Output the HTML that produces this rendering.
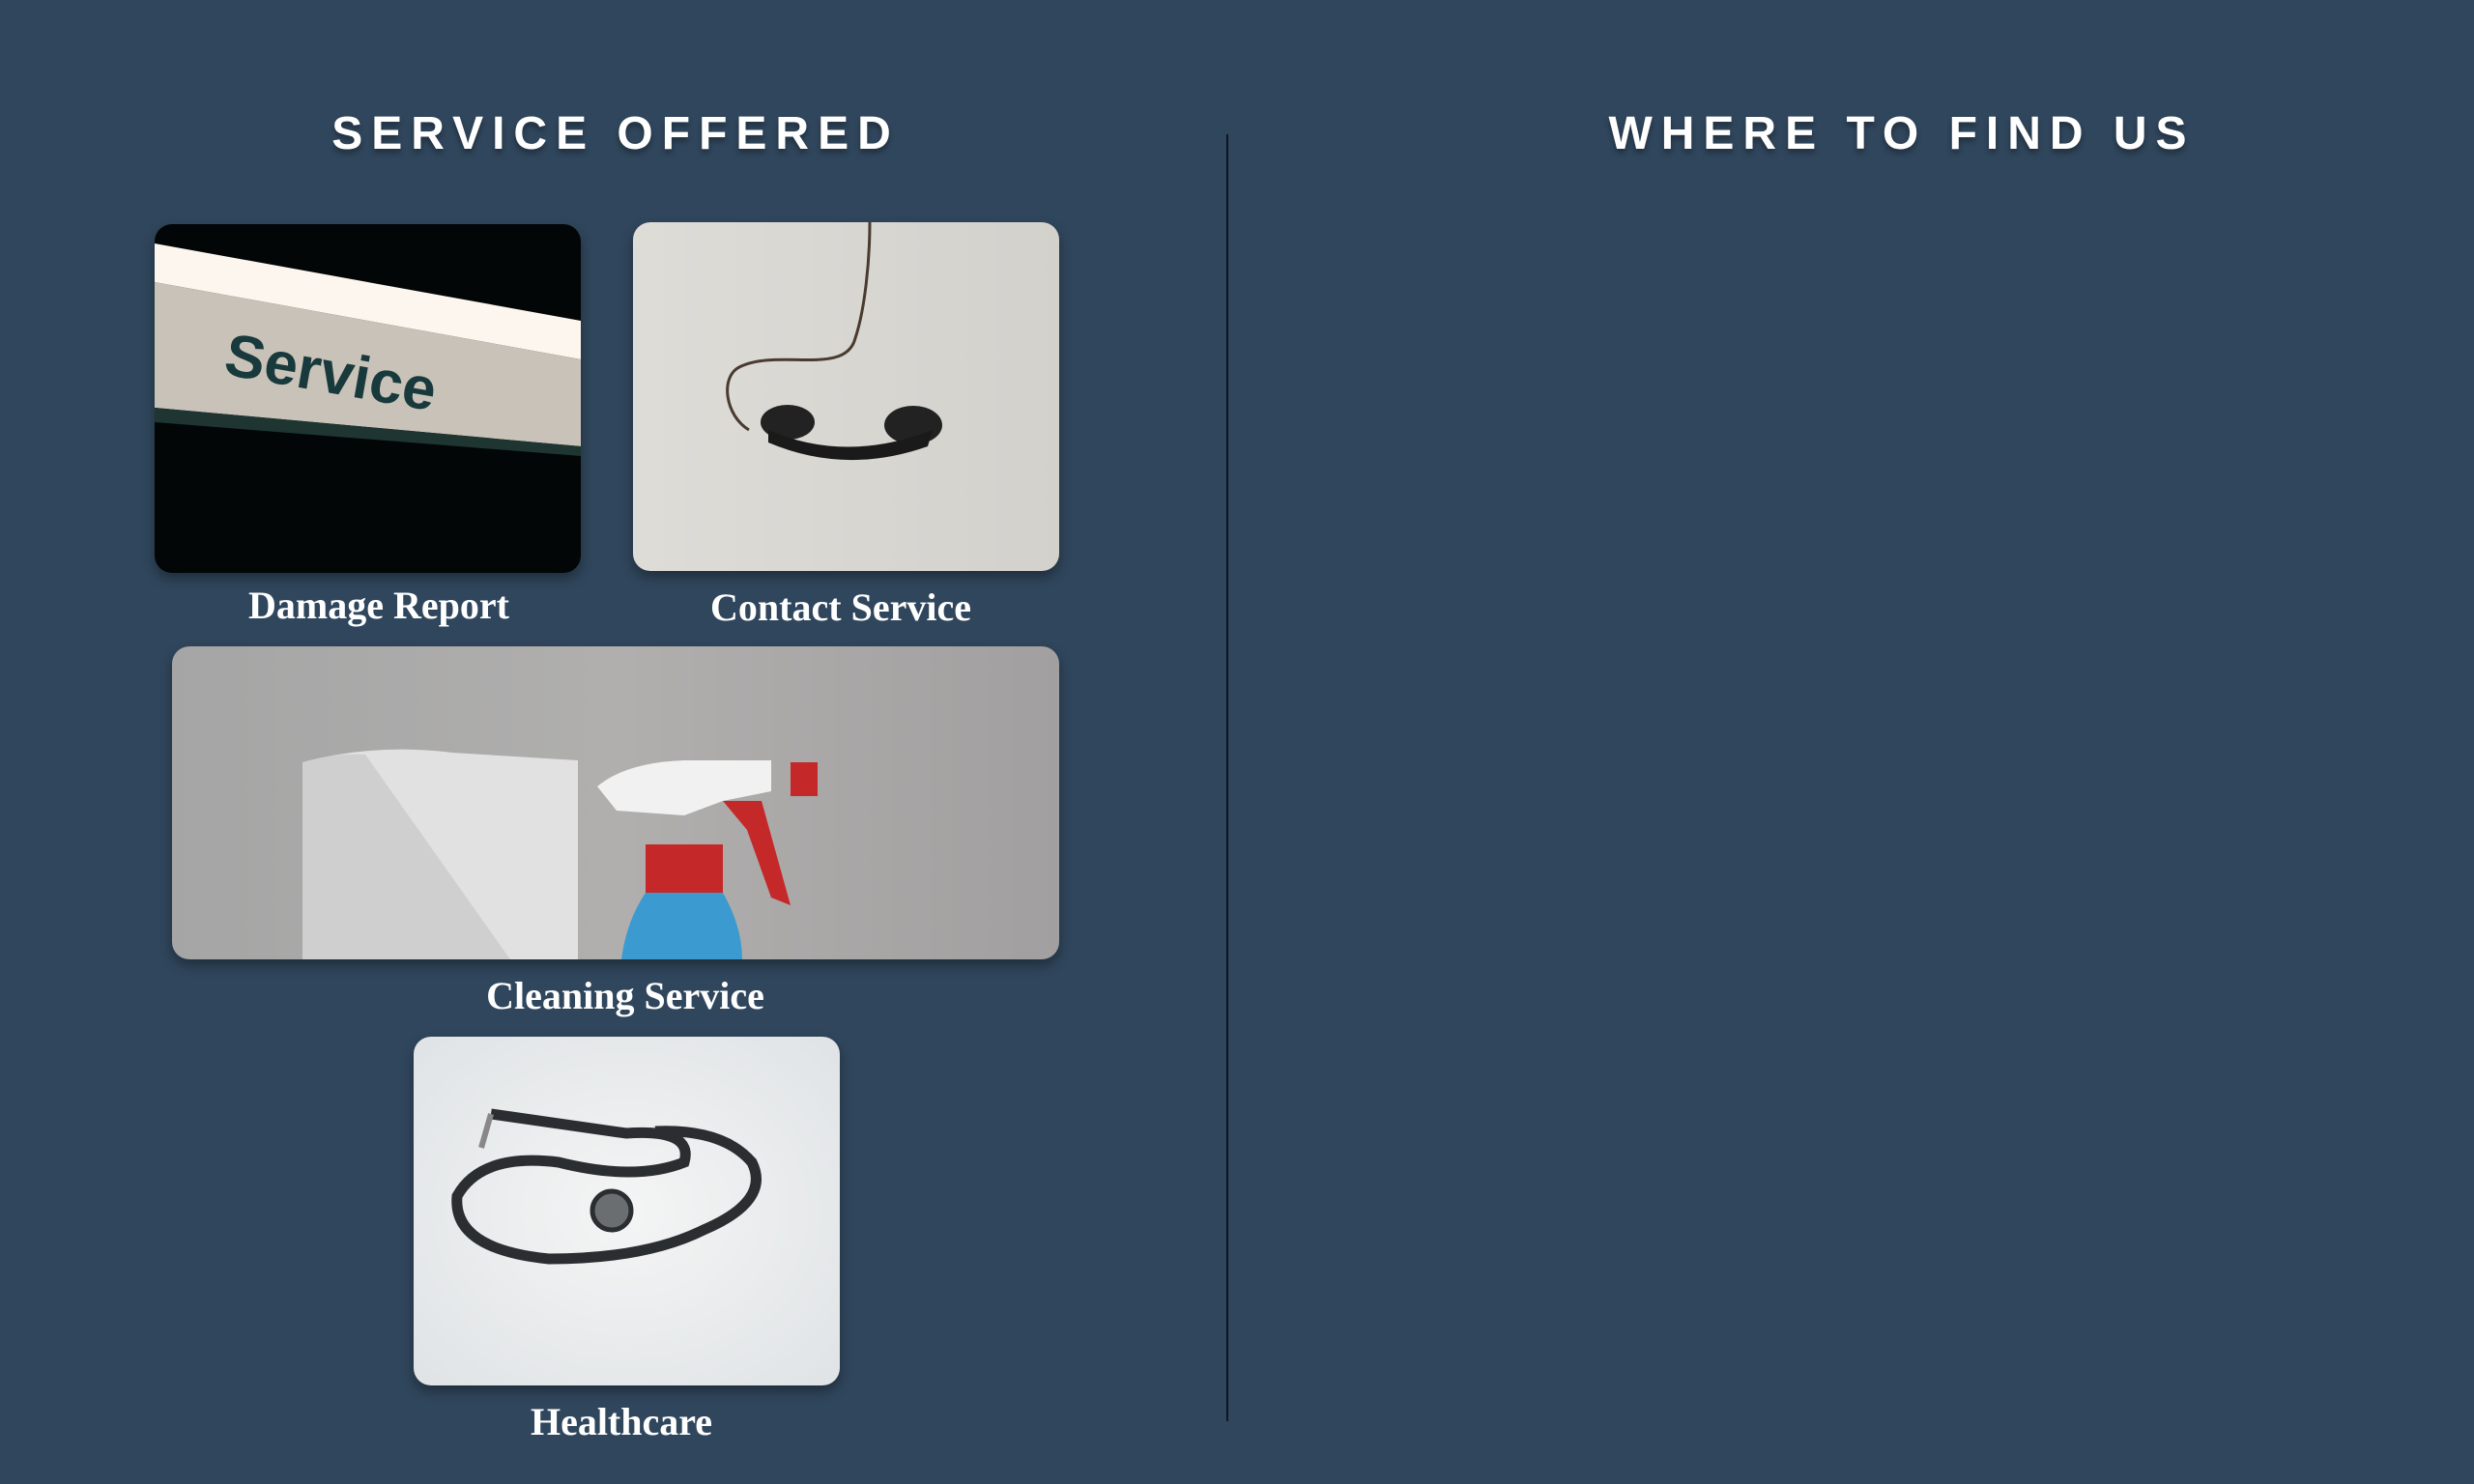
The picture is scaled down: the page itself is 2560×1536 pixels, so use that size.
<!DOCTYPE html>
<html><head><meta charset="utf-8"><style>
html,body{margin:0;padding:0}
body{width:2560px;height:1536px;background:#30465c;position:relative;overflow:hidden;font-family:"Liberation Sans",sans-serif}
.h{position:absolute;top:111px;color:#fff;font-size:48px;font-weight:bold;letter-spacing:9px;text-shadow:0 4px 6px rgba(0,0,0,.35);white-space:nowrap;transform:translateX(-50%)}
.line{position:absolute;left:1269px;top:139px;width:2px;height:1332px;background:#0c1520}
.card{position:absolute;border-radius:18px;overflow:hidden;box-shadow:0 6px 12px rgba(0,0,0,.35)}
.lbl{position:absolute;color:#fff;font-family:"Liberation Serif",serif;font-size:40px;font-weight:bold;transform:translateX(-50%);white-space:nowrap}
</style></head><body>
<div class="h" style="left:637px">SERVICE OFFERED</div>
<div class="h" style="left:1968px">WHERE TO FIND US</div>
<div class="line"></div>

<div class="card" style="left:160px;top:232px;width:441px;height:361px;background:#020607">
<svg width="441" height="361" viewBox="0 0 441 361">
<polygon points="0,20 441,100 441,140 0,60" fill="#fdf6ee"/>
<polygon points="0,60 441,140 441,230 0,190" fill="#c9c2b8"/>
<polygon points="0,190 441,230 441,240 0,205" fill="#1e3532"/>
<text x="70" y="155" font-family="Liberation Sans" font-weight="bold" font-size="62" fill="#183a3c" transform="rotate(10 70 155)">Service</text>
</svg></div>
<div class="lbl" style="left:392px;top:603px">Damage Report</div>

<div class="card" style="left:655px;top:230px;width:441px;height:361px;background:linear-gradient(90deg,#dedcd7,#d3d1cc)">
<svg width="441" height="361" viewBox="0 0 441 361">
<path d="M245,0 C245,40 240,90 230,120 C220,160 150,130 110,150 C90,160 95,200 120,215" stroke="#4a3b30" stroke-width="3" fill="none"/>
<ellipse cx="160" cy="207" rx="28" ry="18" fill="#222"/>
<ellipse cx="290" cy="210" rx="30" ry="20" fill="#222"/>
<path d="M140,215 Q220,250 310,215 L305,232 Q220,262 140,228Z" fill="#1a1a1a"/>
</svg></div>
<div class="lbl" style="left:870px;top:605px">Contact Service</div>

<div class="card" style="left:178px;top:669px;width:918px;height:324px;background:linear-gradient(90deg,#a5a5a5,#b0afae 50%,#a19f9f)">
<svg width="918" height="324" viewBox="0 0 918 324">
<path d="M135,120 Q210,100 290,110 L420,118 L420,324 L135,324 Z" fill="#e1e1e1"/>
<path d="M135,120 Q170,110 200,112 L350,324 L135,324Z" fill="#cfcfcf"/>
<path d="M440,145 Q470,120 530,118 L620,118 L620,150 L570,160 L530,175 L460,170 Z" fill="#f1f1f1"/>
<rect x="640" y="120" width="28" height="35" fill="#c52828"/>
<path d="M570,160 L610,160 L640,268 L620,260 L595,190 Z" fill="#c52828"/>
<rect x="490" y="205" width="80" height="50" fill="#c52828"/>
<path d="M490,255 L570,255 Q590,290 590,324 L465,324 Q470,285 490,255Z" fill="#3b9ad0"/>
</svg></div>
<div class="lbl" style="left:647px;top:1007px">Cleaning Service</div>

<div class="card" style="left:428px;top:1073px;width:441px;height:361px;background:radial-gradient(ellipse at 50% 50%,#f4f5f5,#dfe3e5)">
<svg width="441" height="361" viewBox="0 0 441 361">
<path d="M80,80 Q150,90 220,100 Q290,95 280,130 Q230,150 150,130 Q70,120 45,165 Q40,220 140,230 Q240,230 300,200 Q370,170 350,130 Q320,95 250,98" stroke="#2a2e30" stroke-width="11" fill="none"/>
<circle cx="205" cy="180" r="20" fill="#6a6e70" stroke="#2a2e30" stroke-width="5"/>
<path d="M80,80 L70,115" stroke="#888" stroke-width="6"/>
</svg></div>
<div class="lbl" style="left:643px;top:1448px">Healthcare</div>
</body></html>
